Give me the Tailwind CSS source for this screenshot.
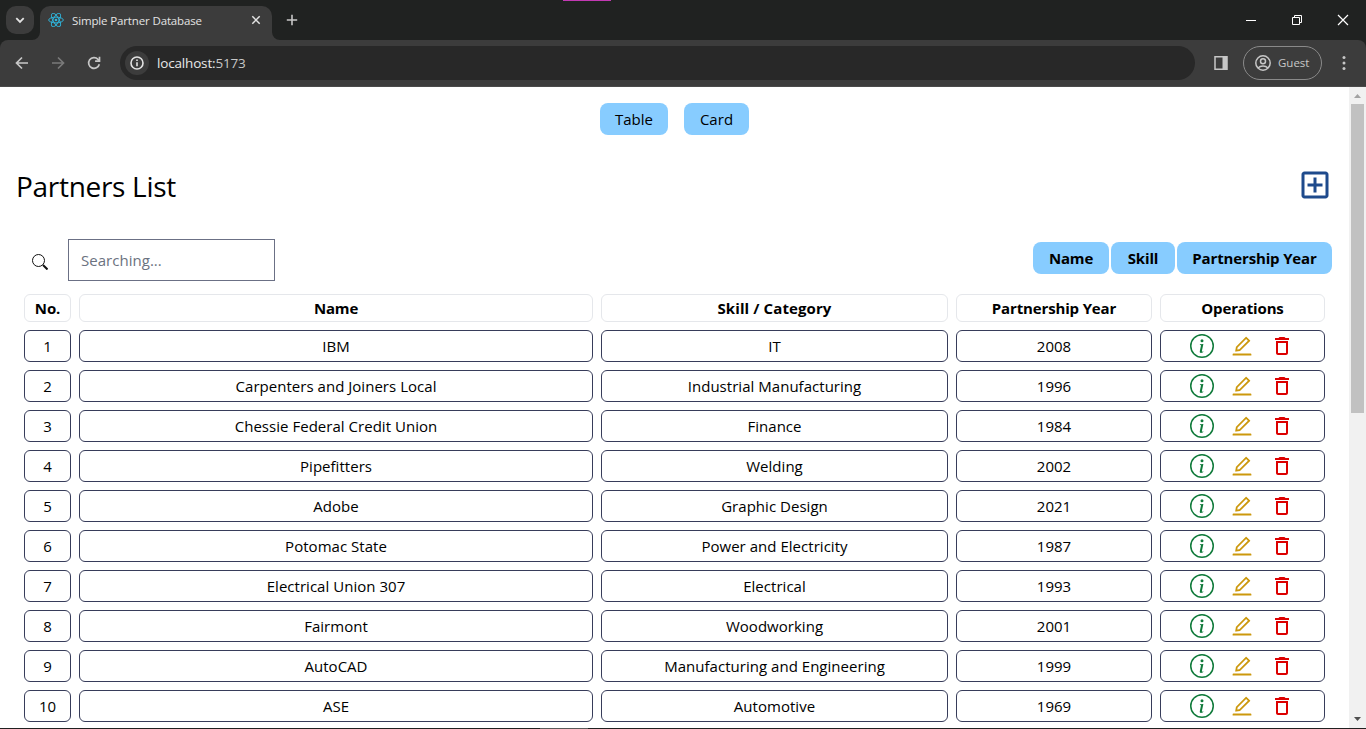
<!DOCTYPE html>
<html lang="en">
<head>
<meta charset="utf-8">
<title>Simple Partner Database</title>
<script src="https://cdn.jsdelivr.net/npm/@tailwindcss/browser@4"></script>
</head>
<body class="w-[1366px] h-[729px] overflow-hidden flex flex-col bg-white text-black font-['Segoe_UI','Open_Sans',sans-serif]">
<svg class="hidden">
  <symbol id="info" viewBox="0 0 16 16"><path d="M8 15A7 7 0 1 1 8 1a7 7 0 0 1 0 14m0 1A8 8 0 1 0 8 0a8 8 0 0 0 0 16"/><path d="m8.93 6.588-2.29.287-.082.38.45.083c.294.07.352.176.288.469l-.738 3.468c-.194.897.105 1.319.808 1.319.545 0 1.178-.252 1.465-.598l.088-.416c-.2.176-.492.246-.686.246-.275 0-.375-.193-.304-.533zM9 4.5a1 1 0 1 1-2 0 1 1 0 0 1 2 0"/></symbol>
  <symbol id="edit" viewBox="0 0 1024 1024"><path d="M257.7 752c2 0 4-.2 6-.5L431.9 722c2-.4 3.9-1.3 5.3-2.8l423.9-423.9a9.96 9.96 0 0 0 0-14.1L694.9 114.9c-1.9-1.9-4.4-2.9-7.1-2.9s-5.2 1-7.1 2.9L256.8 538.8c-1.5 1.5-2.4 3.3-2.8 5.3l-29.5 168.2a33.5 33.5 0 0 0 9.4 29.8c6.6 6.4 14.9 9.9 23.8 9.9zm67.4-174.4L687.8 215l73.3 73.3-362.7 362.6-88.9 15.7 15.6-89zM880 836H144c-17.7 0-32 14.3-32 32v36c0 4.400 3.600 8 8 8h784c4.400 0 8-3.600 8-8v-36c0-17.700-14.300-32-32-32z"/></symbol>
  <symbol id="delete" viewBox="0 0 24 24"><path d="M6 19c0 1.1.9 2 2 2h8c1.1 0 2-.9 2-2V7H6v12zM8 9h8v10H8V9zm7.5-5l-1-1h-5l-1 1H5v2h14V4h-3.5z"/></symbol>
</svg>

<!-- Tab strip -->
<header class="relative h-10 shrink-0 bg-[#202221] flex items-start text-[#e3e3e3]">
  <div class="absolute left-[563px] top-0 w-12 h-px bg-[#c239b3]"></div>
  <button class="ml-1.5 mt-1.5 size-7 rounded-[10px] bg-[#3c3c3c] grid place-items-center">
    <svg class="size-4" viewBox="0 0 16 16" fill="none" stroke="currentColor" stroke-width="1.8"><path d="M4.3 6.2 8 9.9l3.7-3.7"/></svg>
  </button>
  <div class="relative ml-1.5 mt-1.5 h-[34px] w-[232px] rounded-t-[10px] bg-[#3c3c3c] flex items-center pl-2 pb-1.5 pr-2">
    <svg class="absolute -left-2 bottom-0 size-2" viewBox="0 0 8 8" fill="#3c3c3c"><path d="M8 0v8H0a8 8 0 0 0 8-8"/></svg>
    <svg class="absolute -right-2 bottom-0 size-2" viewBox="0 0 8 8" fill="#3c3c3c"><path d="M0 0v8h8a8 8 0 0 1-8-8"/></svg>
    <svg class="size-4" viewBox="-12 -12 24 24" fill="none" stroke="#2fb5dc" stroke-width="1.4"><circle r="2" fill="#2fb5dc" stroke="none"/><ellipse rx="11" ry="4.3"/><ellipse rx="11" ry="4.3" transform="rotate(60)"/><ellipse rx="11" ry="4.3" transform="rotate(120)"/></svg>
    <span class="ml-2 mt-px text-[11.5px] leading-4 tracking-[-0.14px] whitespace-nowrap">Simple Partner Database</span>
    <svg class="ml-auto size-4" viewBox="0 0 16 16" fill="none" stroke="currentColor" stroke-width="1.5"><path d="m4.3 4.3 7.4 7.4m0-7.4-7.4 7.4"/></svg>
  </div>
  <svg class="ml-3 mt-3 size-4" viewBox="0 0 16 16" fill="none" stroke="#c7c7c7" stroke-width="1.6"><path d="M8 2.8v10.4M2.8 8h10.4"/></svg>
  <div class="ml-auto mr-[15px] mt-3 flex gap-[30px] text-white">
    <svg class="size-4" viewBox="0 0 16 16" stroke="currentColor"><path d="M3 8.5h10"/></svg>
    <svg class="size-4" viewBox="0 0 16 16" fill="none" stroke="currentColor"><path d="M3.5 5.5h7v7h-7zM5.5 5.500v-2h7v7h-2"/></svg>
    <svg class="size-4" viewBox="0 0 16 16" fill="none" stroke="currentColor" stroke-width="1.2"><path d="m3 3 10 10m0-10L3 13"/></svg>
  </div>
</header>

<!-- Address bar -->
<div class="h-[47px] shrink-0 bg-[#202221]">
<nav class="h-[47px] rounded-t-lg bg-[#3c3c3c] border-b border-[#4a4a4a] flex items-center text-[#c7c7c7]">
  <svg class="ml-3.5 size-4" viewBox="0 0 16 16" fill="none" stroke="currentColor" stroke-width="1.7"><path d="M14 8H3M8 2.5 2.5 8 8 13.5"/></svg>
  <svg class="ml-5 size-4 text-[#7a7a7a]" viewBox="0 0 16 16" fill="none" stroke="currentColor" stroke-width="1.7"><path d="M2 8h11M8 2.5 13.5 8 8 13.5"/></svg>
  <svg class="ml-5 size-4" viewBox="0 0 16 16" fill="none" stroke="currentColor" stroke-width="1.7"><path d="M13.3 9.2A5.4 5.4 0 1 1 12 4.3L13.2 5.6"/><path d="M13.5 1.8v4.4H9.1"/></svg>
  <div class="ml-[18px] w-[1075px] h-[34px] rounded-full bg-[#282828] flex items-center pl-[5px]">
    <span class="size-6 rounded-full bg-[#3c3c3c] grid place-items-center">
      <svg class="size-4" viewBox="0 0 16 16" fill="none" stroke="#e3e3e3" stroke-width="1.6"><circle cx="8" cy="8" r="6"/><path d="M8 7.2v4M8 4.6v1.5"/></svg>
    </span>
    <span class="ml-2 text-[13.5px] leading-5 text-[#c7c7c7] tracking-[-0.17px]"><span class="text-[#e8e8e8]">localhost:</span>5173</span>
  </div>
  <svg class="ml-[18px] size-4" viewBox="0 0 16 16"><path fill="none" stroke="currentColor" stroke-width="1.5" d="M2 1.8h12v12.4H2z"/><path fill="currentColor" d="M9.5 1.5H14v13H9.5z"/></svg>
  <div class="ml-3.5 w-[79px] h-[34px] rounded-full border border-[#8a8a8a] flex items-center pl-[11px]">
    <svg class="size-4" viewBox="0 0 16 16" fill="none" stroke="currentColor" stroke-width="1.5"><circle cx="8" cy="8" r="7.2"/><circle cx="8" cy="6.3" r="2.5"/><path d="M3 13c2.7-2.7 7.3-2.7 10 0"/></svg>
    <span class="ml-[7px] text-[11.5px] leading-4">Guest</span>
  </div>
  <svg class="ml-3.5 size-4" viewBox="0 0 16 16" fill="currentColor"><circle cx="8" cy="2.5" r="1.5"/><circle cx="8" cy="8" r="1.5"/><circle cx="8" cy="13.5" r="1.5"/></svg>
</nav>
</div>

<!-- Page viewport -->
<div class="h-[641px] shrink-0 flex overflow-hidden">
  <main class="w-[1349px] shrink-0 px-4 pt-4 text-[15px] tracking-[0.03px]">
    <div class="flex justify-center gap-4 leading-6 h-8">
      <button class="w-[68px] h-8 rounded-lg bg-[#87ccff]">Table</button>
      <button class="w-[65px] h-8 rounded-lg bg-[#87ccff]">Card</button>
    </div>
    <div class="mt-8 h-9 flex items-center justify-between">
      <h1 class="pt-0.5 text-[28px] leading-9 tracking-[-0.3px]">Partners List</h1>
      <svg class="size-9" viewBox="0 0 24 24" fill="#1e4a8c"><path d="M19 3H5c-1.11 0-2 .9-2 2v14c0 1.1.89 2 2 2h14c1.1 0 2-.9 2-2V5c0-1.1-.9-2-2-2zm0 16H5V5h14v14zm-8-2h2v-4h4v-2h-4V7h-2v4H7v2h4z"/></svg>
    </div>
    <div class="mt-9 flex items-start">
      <svg class="ml-4 mt-[15px] size-4" viewBox="0 0 16 16" fill="none" stroke="#111"><circle cx="6.5" cy="6.5" r="6"/><path stroke-width="2" d="m11 11 4.5 4.5"/></svg>
      <input class="ml-5 w-[207px] h-[42px] border border-[#6b7085] px-3 pb-px text-[15px] placeholder:text-[#6b7280]" placeholder="Searching...">
      <div class="ml-auto mr-px mt-[3px] flex gap-0.5 font-bold leading-6 tracking-[-0.15px]">
        <button class="w-[76px] h-8 rounded-lg bg-[#87ccff]">Name</button>
        <button class="w-16 h-8 rounded-lg bg-[#87ccff]">Skill</button>
        <button class="w-[155px] h-8 rounded-lg bg-[#87ccff]">Partnership Year</button>
      </div>
    </div>
    <section id="partners" class="ml-2 mt-[13px] grid grid-cols-[47px_514px_347px_196px_165px] gap-2 text-center">
      <div class="h-7 rounded-md border border-[#e5e7eb] font-bold leading-[26px] tracking-[-0.15px]">No.</div>
      <div class="h-7 rounded-md border border-[#e5e7eb] font-bold leading-[26px] tracking-[-0.15px]">Name</div>
      <div class="h-7 rounded-md border border-[#e5e7eb] font-bold leading-[26px] tracking-[0.1px]">Skill / Category</div>
      <div class="h-7 rounded-md border border-[#e5e7eb] font-bold leading-[26px] tracking-[-0.15px]">Partnership Year</div>
      <div class="h-7 rounded-md border border-[#e5e7eb] font-bold leading-[26px] tracking-[-0.15px]">Operations</div>
    </section>
  </main>
  <aside class="w-[17px] shrink-0 bg-[#f1f1f1] flex flex-col items-center">
    <svg class="h-[17px] w-[17px] shrink-0" viewBox="0 0 17 17" fill="#a3a3a3"><path d="M5 11h7L8.5 7z"/></svg>
    <div class="w-[13px] h-[309px] bg-[#c1c1c1]"></div>
    <svg class="mt-auto h-[17px] w-[17px] shrink-0" viewBox="0 0 17 17" fill="#505050"><path d="M5 6h7l-3.5 4z"/></svg>
  </aside>
</div>
<div class="h-px shrink-0 bg-[#202020] flex"><div class="ml-[540px] w-12 h-px bg-[#5a5a5a]"></div></div>

<script>
const partners = [
  ["IBM","IT",2008],["Carpenters and Joiners Local","Industrial Manufacturing",1996],
  ["Chessie Federal Credit Union","Finance",1984],["Pipefitters","Welding",2002],
  ["Adobe","Graphic Design",2021],["Potomac State","Power and Electricity",1987],
  ["Electrical Union 307","Electrical",1993],["Fairmont","Woodworking",2001],
  ["AutoCAD","Manufacturing and Engineering",1999],["ASE","Automotive",1969]
];
const cell = t => `<div class="h-8 rounded-md border border-[#373c5a] leading-[30px]">${t}</div>`;
document.getElementById("partners").insertAdjacentHTML("beforeend", partners.map((p, i) =>
  cell(i + 1) + p.map(cell).join("") +
  `<div class="h-8 rounded-md border border-[#373c5a] flex items-center justify-center gap-4 pr-[1px]">
    <svg class="size-6 fill-[#0f7a3a]"><use href="#info"/></svg>
    <svg class="size-6 fill-[#cc980c]"><use href="#edit"/></svg>
    <svg class="size-6 fill-[#dc0000]"><use href="#delete"/></svg>
  </div>`).join(""));
</script>
</body>
</html>
